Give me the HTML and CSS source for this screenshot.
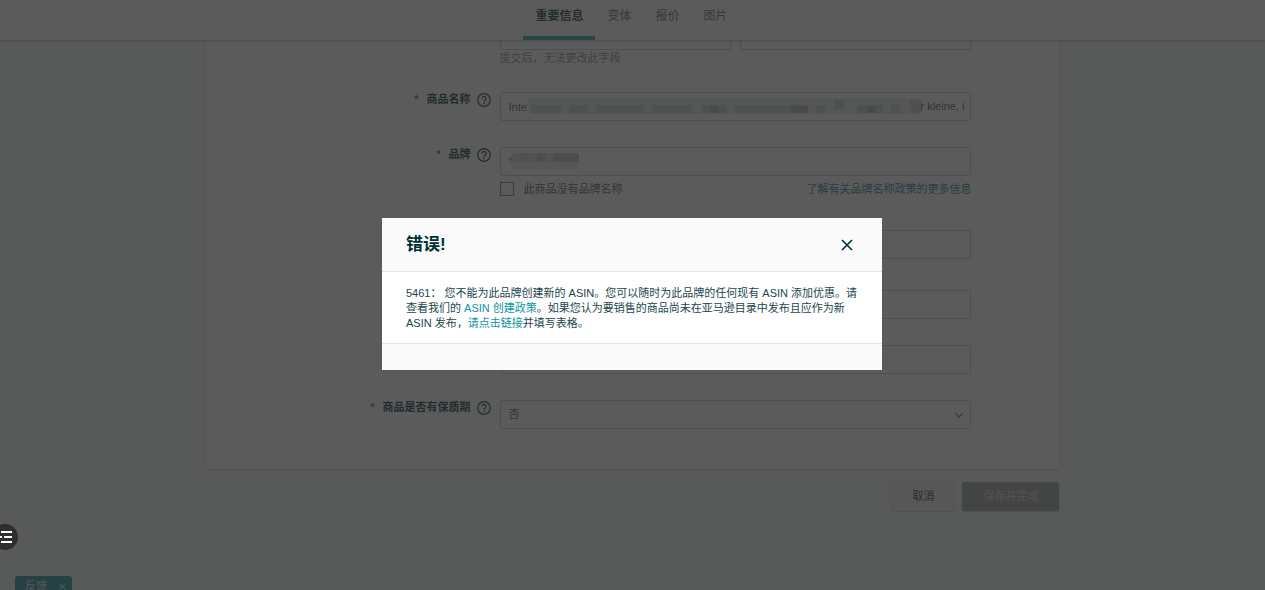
FILE: index.html
```html
<!DOCTYPE html>
<html lang="zh-CN">
<head>
  <meta charset="UTF-8" />
  <meta name="viewport" content="width=device-width, initial-scale=1.0" />
  <title>重要信息</title>
  <link rel="stylesheet" href="styles.css">
</head>
<body>

<svg width="0" height="0" class="symbols" aria-hidden="true">
  <symbol id="help" viewBox="0 0 14 14">
    <circle cx="7" cy="7" r="6.3" fill="none" stroke="currentColor" stroke-width="1.2" />
    <path d="M5 5.5a2 2 0 1 1 3 1.7c-.7.4-1 .7-1 1.5" fill="none" stroke="currentColor" stroke-width="1.2" />
    <circle cx="7" cy="10.4" r=".8" fill="currentColor" />
  </symbol>
</svg>

<header class="topbar">
  <nav class="tabs">
    <a href="#info" class="tab active">重要信息</a>
    <a href="#variants" class="tab">变体</a>
    <a href="#offer" class="tab">报价</a>
    <a href="#images" class="tab">图片</a>
  </nav>
</header>

<main class="page">
  <form id="info">
    <div class="card">
      <div class="row">
        <div class="label"></div>
        <div class="field">
          <div class="pair">
            <input type="text" aria-label="商品编码">
            <input type="text" aria-label="编码类型">
          </div>
          <p class="hint">提交后，无法更改此字段</p>
        </div>
      </div>

      <div class="row">
        <div class="label">
          <span class="star">*</span><label for="name">商品名称</label>
          <svg class="help"><use href="#help" /></svg>
        </div>
        <div class="field">
          <input type="text" id="name" value="Inter">
          <svg class="mosaic mosaic-name" viewBox="0 0 396 16" preserveAspectRatio="none">
            <rect width="396" height="16" rx="6" fill="#e8eeee" />
            <g fill="#ccd5d6">
              <rect x="5" y="7" width="30" height="8" /><rect x="44" y="7" width="18" height="8" />
              <rect x="70" y="7" width="48" height="8" /><rect x="126" y="7" width="40" height="8" />
              <rect x="175" y="7" width="25" height="8" /><rect x="208" y="7" width="72" height="8" />
              <rect x="290" y="7" width="9" height="8" /><rect x="308" y="2" width="10" height="10" />
              <rect x="331" y="7" width="26" height="8" /><rect x="365" y="7" width="9" height="8" />
              <rect x="384" y="2" width="12" height="13" />
            </g>
            <g fill="#b2bdc0">
              <rect x="184" y="8" width="8" height="7" /><rect x="265" y="8" width="17" height="7" />
              <rect x="341" y="8" width="8" height="7" />
            </g>
          </svg>
          <span class="tail">r kleine, i</span>
        </div>
      </div>

      <div class="row">
        <div class="label">
          <span class="star">*</span><label for="brand">品牌</label>
          <svg class="help"><use href="#help" /></svg>
        </div>
        <div class="field">
          <input type="text" id="brand" value="Y">
          <svg class="mosaic mosaic-brand" viewBox="0 0 68 16" preserveAspectRatio="none">
            <rect width="68" height="16" rx="4" fill="#e8f0ef" />
            <rect width="68" height="9" rx="4" fill="#d6dee0" />
            <rect x="10" width="9" height="9" fill="#cad4d6" />
            <rect x="26" width="9" height="9" fill="#c2ccd2" />
            <rect x="43" width="25" height="9" fill="#bec8cd" />
          </svg>
          <div class="under">
            <input type="checkbox" id="nobrand">
            <label for="nobrand">此商品没有品牌名称</label>
            <a href="#policy">了解有关品牌名称政策的更多信息</a>
          </div>
        </div>
      </div>

      <div class="row tall">
        <div class="label"></div>
        <div class="field"><input type="text" aria-label="制造商"></div>
      </div>
      <div class="row">
        <div class="label"></div>
        <div class="field"><input type="text" aria-label="型号"></div>
      </div>
      <div class="row">
        <div class="label"></div>
        <div class="field"><input type="text" aria-label="零件编号"></div>
      </div>

      <div class="row">
        <div class="label">
          <span class="star">*</span><label for="expire">商品是否有保质期</label>
          <svg class="help"><use href="#help" /></svg>
        </div>
        <div class="field">
          <select id="expire"><option>否</option><option>是</option></select>
          <svg class="chevron" viewBox="0 0 10 6"><path d="M1 1l4 4 4-4" fill="none" stroke="currentColor" stroke-width="1.4" /></svg>
        </div>
      </div>
    </div>

    <div class="actions">
      <button type="button" class="btn">取消</button>
      <button type="button" class="btn save">保存并完成</button>
    </div>
  </form>
</main>

<button class="feedback">反馈
  <svg viewBox="0 0 8 8"><path d="M1 1l6 6M7 1L1 7" stroke="currentColor" stroke-width="1.2" /></svg>
</button>

<!-- Error dialog -->
<div class="overlay">
  <div class="modal" role="dialog" aria-labelledby="modal-title">
    <div class="modal-head">
      <h1 id="modal-title">错误!</h1>
      <button class="close" aria-label="关闭">
        <svg viewBox="0 0 12 12"><path d="M1 1l10 10M11 1L1 11" stroke="currentColor" stroke-width="1.6" /></svg>
      </button>
    </div>
    <p class="modal-body">5461： 您不能为此品牌创建新的 ASIN。您可以随时为此品牌的任何现有 ASIN 添加优惠。请查看我们的 <a href="#asin">ASIN 创建政策</a>。如果您认为要销售的商品尚未在亚马逊目录中发布且应作为新 ASIN 发布，<a href="#apply">请点击链接</a>并填写表格。</p>
    <div class="modal-foot"></div>
  </div>
</div>

<button class="side-menu" aria-label="菜单">
  <svg viewBox="0 0 12 14"><path d="M1 2h11M0 7h2M4 7h8M1 12h11" stroke="currentColor" stroke-width="2" /></svg>
</button>

</body>
</html>
```
FILE: styles.css
```css
* { margin: 0; padding: 0; box-sizing: border-box; }

body {
  font-family: "Liberation Sans", "Noto Sans CJK SC", sans-serif;
  font-size: 11px;
  line-height: 15px;
  color: #1c454c;
  background: #f1f7f5;
  height: 100vh;
  overflow: hidden;
}

input, select, button { font: inherit; color: inherit; }
a { color: #2a8c9a; text-decoration: none; }
.symbols { position: absolute; }

/* top tabs */
.topbar {
  position: relative;
  z-index: 1;
  background: #fff;
  height: 40px;
  box-shadow: 0 1px 2px #b8b8b8;
}

.tabs { display: flex; justify-content: center; height: 100%; padding-right: 2px; }

.tab {
  padding: 9px 12px 0;
  font-size: 12px;
  color: #66757a;
}

.tab.active {
  font-weight: bold;
  color: #1c454c;
  border-bottom: 4px solid #30a4ac;
}

/* form */
.page { width: 67.5%; margin: -19px auto 0; }

.card {
  display: flex;
  flex-direction: column;
  gap: 26px;
  background: #fff;
  padding: 0 88px 40px 0;
  box-shadow: 0 1px 2px #d4dada;
}

.row { display: grid; grid-template-columns: 294px 1fr; }
.row.tall { padding-bottom: 5px; }

.label {
  display: flex;
  justify-content: flex-end;
  align-items: center;
  height: 15px;
  padding-right: 9px;
  font-weight: bold;
}

.star { color: #2a8c9a; margin-right: 8px; }
.help { width: 14px; height: 14px; margin-left: 6px; }

.field { position: relative; }

.field input[type="text"], .field select {
  display: block;
  width: 100%;
  height: 29px;
  padding: 0 8px;
  border: 1px solid #ccd0d0;
  border-radius: 2px;
  background: #fff;
  color: #56676b;
  appearance: none;
}

.pair { display: grid; grid-template-columns: 1fr 1fr; gap: 9px; }
.hint { line-height: 16px; color: #8c9698; }

.mosaic { position: absolute; top: 6px; height: 16px; }
.mosaic-name { left: 26px; width: 84%; }
.mosaic-brand { left: 11px; width: 68px; }

.tail {
  position: absolute;
  top: 7px;
  right: 7px;
  color: #56676b;
}

.under {
  display: flex;
  align-items: center;
  height: 28px;
  padding-bottom: 2px;
  color: #56676b;
}

.under input {
  appearance: none;
  width: 14px;
  height: 14px;
  margin-right: 10px;
  border: 1px solid #4a9aa6;
}

.under a { margin-left: auto; }

.chevron {
  position: absolute;
  top: 12px;
  right: 7px;
  width: 10px;
  height: 6px;
  color: #7c8c90;
}

.actions {
  display: flex;
  justify-content: flex-end;
  gap: 7px;
  margin-top: 13px;
}

.btn {
  height: 29px;
  padding: 0 21px;
  border: 0;
  border-radius: 2px;
  background: #eef0f0;
  box-shadow: 0 1px 2px #c8d0d0;
}

.btn.save { background: #a0a4a6; color: #dcdcdc; }

.feedback {
  position: fixed;
  left: 15px;
  bottom: -6px;
  display: flex;
  justify-content: space-between;
  align-items: center;
  width: 57px;
  height: 20px;
  padding: 0 6px 0 10px;
  border: 0;
  border-radius: 3px;
  background: #2c98a4;
  color: #dff0f0;
}

.feedback svg { width: 7px; height: 7px; }

/* dialog */
.overlay {
  position: fixed;
  inset: 0;
  z-index: 10;
  display: flex;
  justify-content: center;
  align-items: center;
  padding: 0 1px 2px 0;
  background: rgba(36, 36, 36, 0.75);
}

.modal { width: 500px; background: #fff; }

.modal-head {
  display: flex;
  justify-content: space-between;
  align-items: center;
  height: 54px;
  padding: 0 29px 0 24px;
  background: #fafafa;
  border-bottom: 1px solid #e3e5e5;
  color: #002f36;
}

.modal-head h1 { font-size: 17px; line-height: 24px; }

.close { width: 12px; height: 12px; border: 0; background: none; }
.close svg { display: block; }

.modal-body { padding: 14px 18px 12px 24px; }
.modal-body a { color: #0d93a5; }

.modal-foot {
  height: 27px;
  background: #fafafa;
  border-top: 1px solid #e3e5e5;
}

.side-menu {
  position: fixed;
  left: -8px;
  bottom: 40px;
  z-index: 11;
  width: 26px;
  height: 26px;
  padding-left: 8px;
  border: 0;
  border-radius: 50%;
  background: #2e2e2e;
  color: #fff;
}

.side-menu svg { display: block; width: 12px; height: 14px; }
```
